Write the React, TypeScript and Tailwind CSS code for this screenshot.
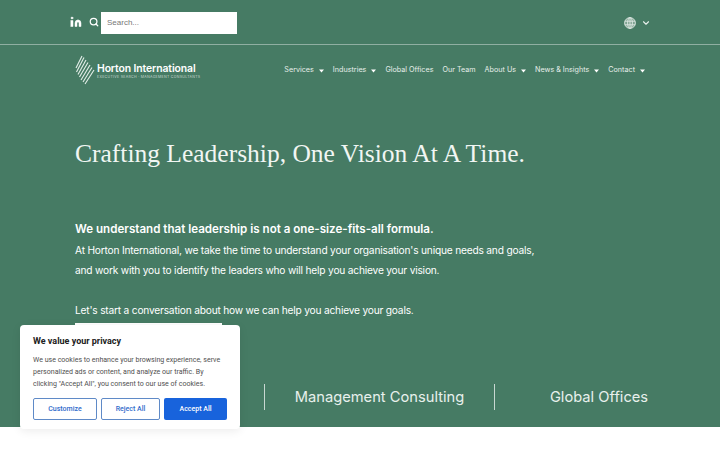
import { ChevronDown, Search, Linkedin } from 'lucide-react';

const navItems = [
  { label: 'Services', caret: true },
  { label: 'Industries', caret: true },
  { label: 'Global Offices', caret: false },
  { label: 'Our Team', caret: false },
  { label: 'About Us', caret: true },
  { label: 'News & Insights', caret: true },
  { label: 'Contact', caret: true },
];

function Caret() {
  return (
    <svg width="5" height="4" viewBox="0 0 6 4" className="ml-[5px] mt-px">
      <path d="M0 0.3h6L3 3.8z" fill="#fff" />
    </svg>
  );
}

function Logo() {
  return (
    <div className="flex items-center">
      <svg width="20" height="30" viewBox="0 0 20 30" fill="none" stroke="#e4eee9" strokeWidth="1.1">
        <path d="M1 13L7 1" />
        <path d="M1.5 17L9 2.5" />
        <path d="M3 19.5L11 5" />
        <path d="M4.5 22L13 7.5" />
        <path d="M6 25L15 10" />
        <path d="M8 27L17 12.5" />
        <path d="M10 29L19 15" />
      </svg>
      <div className="ml-[2px] pt-[2px] text-white">
        <div className="text-[10.4px] font-semibold leading-[12px] tracking-[-0.1px] whitespace-nowrap">
          Horton International
        </div>
        <div className="text-[3.55px] leading-[5px] tracking-[0.3px] text-white/70 whitespace-nowrap">
          EXECUTIVE SEARCH · MANAGEMENT CONSULTANTS
        </div>
      </div>
    </div>
  );
}

function CookieBanner() {
  return (
    <div className="absolute left-5 top-[325px] h-[104px] w-[220px] rounded-[4px] bg-white px-[13px] pt-[10px] shadow-[0_2px_10px_rgba(0,0,0,0.08)] font-['Roboto',sans-serif]">
      <div className="text-[9px] font-bold leading-[13px] text-[#212121]">We value your privacy</div>
      <p className="mt-[6px] text-[7.05px] leading-[12px] text-[#4f4f4f] whitespace-nowrap">
        We use cookies to enhance your browsing experience, serve
        <br />
        personalized ads or content, and analyze our traffic. By
        <br />
        clicking "Accept All", you consent to our use of cookies.
      </p>
      <div className="mt-[8px] flex gap-1">
        <button className="h-[22px] w-16 rounded-[2px] border-[1.5px] border-[#5f8ac7] text-[7px] font-medium text-[#2f6bcb]">
          Customize
        </button>
        <button className="h-[22px] w-[59px] rounded-[2px] border-[1.5px] border-[#5f8ac7] text-[7px] font-medium text-[#2f6bcb]">
          Reject All
        </button>
        <button className="h-[22px] w-[63px] rounded-[2px] bg-[#1863dc] text-[7px] font-medium text-white">
          Accept All
        </button>
      </div>
    </div>
  );
}

export default function App() {
  return (
    <div className="relative h-[450px] w-[720px] overflow-hidden bg-white font-['Inter',sans-serif]">
      <div className="h-[427px] bg-[#467b64] text-white">
        {/* top bar */}
        <div className="flex h-[45px] items-center border-b border-white/40 pl-[70px] pr-[69px] pt-[1px]">
          <Linkedin size={12} fill="#fff" strokeWidth={1} className="mb-[2px]" />
          <Search size={10} strokeWidth={3} className="mb-[2px] ml-[7px]" />
          <input
            placeholder="Search..."
            className="ml-[2px] h-[22px] w-[136px] bg-white pl-[6px] font-['Liberation_Sans',sans-serif] text-[8px] text-[#555] outline-none placeholder:text-[#777]"
          />
          <div className="ml-auto flex items-center gap-[4px]">
            <svg width="12" height="12" viewBox="0 0 12 12" fill="none" stroke="#dfe9e4" strokeWidth="0.9">
              <circle cx="6" cy="6" r="5.4" fill="#7fa391" />
              <ellipse cx="6" cy="6" rx="2.4" ry="5.4" />
              <path d="M0.8 4.2h10.4M0.8 7.8h10.4M6 0.6v10.8" />
            </svg>
            <ChevronDown size={10} strokeWidth={2.6} className="ml-[1px] text-[#e8f0ec]" />
          </div>
        </div>

        {/* main nav */}
        <div className="flex h-[50px] items-center pl-[75px] pr-[75px]">
          <Logo />
          <nav className="ml-auto flex items-center gap-[9px] pt-[1px] text-[7.2px] text-[#e6efea]">
            {navItems.map((item) => (
              <span key={item.label} className="flex items-center whitespace-nowrap">
                {item.label}
                {item.caret && <Caret />}
              </span>
            ))}
          </nav>
        </div>

        {/* hero copy */}
        <div className="pl-[75px]">
          <h1 className="mt-[41px] font-['Liberation_Serif',serif] text-[25.5px] leading-[36px] text-[#f1f6f3]">
            Crafting Leadership, One Vision At A Time.
          </h1>
          <p className="mt-[47px] text-[11.6px] font-semibold leading-[20px]">
            We understand that leadership is not a one-size-fits-all formula.
          </p>
          <p className="mt-[1px] text-[10.2px] leading-[20px] tracking-[-0.2px]">
            At Horton International, we take the time to understand your organisation's unique needs and goals,
          </p>
          <p className="text-[10.2px] leading-[20px] tracking-[-0.2px]">
            and work with you to identify the leaders who will help you achieve your vision.
          </p>
          <p className="mt-[20px] text-[10.2px] leading-[20px] tracking-[-0.2px]">
            Let's start a conversation about how we can help you achieve your goals.
          </p>
          <div className="mt-[3px] h-[2px] w-[147px] bg-white" />
        </div>

        {/* services strip */}
        <div className="mt-[59px] flex h-[26px] items-center text-[14.7px] text-[#e8f0ec]">
          <div className="w-[264px]" />
          <div className="flex h-[26px] w-[231px] items-center justify-center border-x-[1.5px] border-white/70 whitespace-nowrap">
            Management Consulting
          </div>
          <div className="flex-1 pr-[17px] text-center whitespace-nowrap">Global Offices</div>
        </div>
      </div>
      <CookieBanner />
    </div>
  );
}
